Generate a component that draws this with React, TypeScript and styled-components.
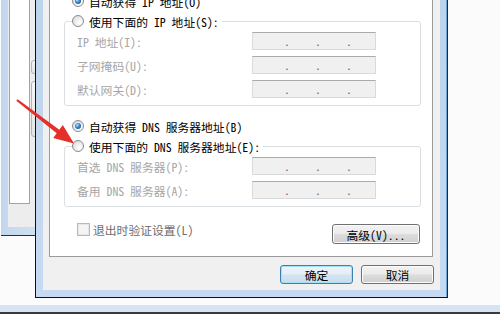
import styled, { createGlobalStyle, css } from 'styled-components';

const GlobalStyle = createGlobalStyle`
  html, body {
    margin: 0;
    padding: 0;
    background: #fbfbfb;
  }
`;

const Desktop = styled.div`
  position: relative;
  width: 500px;
  height: 314px;
  overflow: hidden;
  background: #fbfbfb;
  font-family: "Noto Sans CJK SC", "DejaVu Sans", sans-serif;
  font-size: 11.8px;
  font-feature-settings: "hwid" 1;
  color: #000;
`;

/* window peeking out behind the dialog */
const BackWindow = styled.div`
  position: absolute;
  left: 1px;
  top: -20px;
  width: 40px;
  height: 256px;
  box-sizing: border-box;
  padding: 0 0 8px 7px;
  background: linear-gradient(to right, #c2d7ee, #d2e1f2);
  border-bottom: 1px solid #2e2e2e;
  display: flex;
`;

const BackBody = styled.div`
  flex: 1;
  display: flex;
  gap: 1px;
  padding: 0 0 23px 1px;
  background: #ededed;
`;

const BackPanel = styled.div`
  width: 21px;
  box-sizing: border-box;
  background: #fff;
  border: 1px solid #a3a3a3;
  border-top: none;
`;

const BackSide = styled.div`
  display: flex;
  flex-direction: column;
  padding-top: 80px;
  gap: 7px;
`;

const BackKnob = styled.div<{ $h: number }>`
  width: 8px;
  height: ${p => p.$h}px;
  box-sizing: border-box;
  border: 1px solid #b4b4b4;
  border-radius: 3px;
  background: linear-gradient(#f6f6f6, #e4e4e4);
`;

const BottomWindow = styled.div`
  position: absolute;
  left: 0;
  top: 305px;
  width: 500px;
  height: 9px;
  box-sizing: border-box;
  background: #d5e3f2;
  border-bottom: 2px solid #3a3a3a;
`;

const Dialog = styled.div`
  position: absolute;
  left: 35px;
  top: -20px;
  width: 413px;
  box-sizing: border-box;
  border: 1px solid #111;
  border-right-color: #1c2a3a;
  padding: 7px;
  background: linear-gradient(to bottom, #bcd3ec, #c6dbf1);
  box-shadow: inset -1px 0 0 #6fa3d6;
`;

const Body = styled.div`
  background: #f0f0f0;
  padding: 4px 0 6px 6px;
`;

const TabPage = styled.div`
  width: 384px;
  box-sizing: border-box;
  background: #fff;
  border: 1px solid #9b9b9b;
  padding: 0 0 12px 0;
  display: flex;
  flex-direction: column;
`;

const OptionRow = styled.label<{ $h: number; $mt?: number }>`
  display: flex;
  align-items: center;
  gap: 5px;
  height: ${p => p.$h}px;
  margin-top: ${p => p.$mt ?? 0}px;
  padding-left: 22px;
  white-space: nowrap;
`;

const Radio = styled.span<{ $checked?: boolean }>`
  position: relative;
  flex: none;
  box-sizing: border-box;
  width: 12px;
  height: 12px;
  border-radius: 50%;
  border: 1px solid #8b8b8b;
  background: radial-gradient(circle at 65% 70%, #ffffff 0, #f2f2f2 35%, #d4d4d4 100%);
  ${p =>
    p.$checked &&
    css`
      &::after {
        content: '';
        position: absolute;
        left: 2px;
        top: 2px;
        width: 6px;
        height: 6px;
        border-radius: 50%;
        background: radial-gradient(circle at 38% 35%, #bfe3ff 0, #3b8ad6 40%, #0f3f78 100%);
      }
    `}
`;

const Group = styled.fieldset<{ $mt: number }>`
  margin: ${p => p.$mt}px 11px 0 14px;
  padding: 0;
  min-width: 0;
  border: 1px solid #dadfe3;
  border-radius: 3px;
`;

const GroupLegend = styled.legend`
  display: flex;
  align-items: center;
  gap: 5px;
  height: 20px;
  margin-left: 7px;
  padding: 0 3px 0 0;
  white-space: nowrap;
`;

const FieldGrid = styled.div`
  display: grid;
  grid-template-columns: 175px 124px;
  grid-auto-rows: 18px;
  row-gap: 6px;
  align-items: center;
  padding: 1px 0 7px 12px;
`;

const FieldLabel = styled.span`
  color: #a6a6a6;
  white-space: nowrap;
`;

const IpBox = styled.div`
  box-sizing: border-box;
  height: 18px;
  display: flex;
  gap: 25px;
  padding-left: 31px;
  background: #f0f0f0;
  border: 1px solid #dadada;
  border-top-color: #ababab;
  line-height: 15px;
  color: #6a6a6a;
`;

const IpDot = styled.span`
  width: 6px;
  text-align: center;
`;

const FooterRow = styled.div`
  display: flex;
  justify-content: space-between;
  align-items: flex-start;
  margin-top: 17px;
  padding: 0 12px 0 27px;
`;

const CheckLabel = styled.label`
  display: flex;
  align-items: center;
  gap: 3px;
  height: 13px;
  margin-top: -1px;
  color: #6d6d6d;
  white-space: nowrap;
`;

const CheckBox = styled.span`
  box-sizing: border-box;
  width: 13px;
  height: 13px;
  border: 1px solid #b9b9b9;
  background: #f4f4f4;
  box-shadow: inset 0 0 0 1px #e6e6e6;
`;

const Button = styled.button<{ $w: number; $h: number; $default?: boolean }>`
  box-sizing: border-box;
  width: ${p => p.$w}px;
  height: ${p => p.$h}px;
  padding: 0;
  font: inherit;
  color: #000;
  border-radius: 3px;
  border: 1px solid #707070;
  background: linear-gradient(#f2f2f2 0%, #ebebeb 48%, #dddddd 52%, #cfcfcf 100%);
  box-shadow: inset 0 0 0 1px #fcfcfc;
  ${p =>
    p.$default &&
    css`
      border-color: #3c7fb1;
      background: linear-gradient(#eef5fa 0%, #e4eef6 48%, #d4e4f1 52%, #c9dcec 100%);
      box-shadow: inset 0 0 0 1px #a6e0f8;
    `}
`;

const ButtonBar = styled.div`
  display: flex;
  justify-content: flex-end;
  gap: 8px;
  padding: 8px 6px 0 0;
`;

const ArrowLayer = styled.svg`
  position: absolute;
  left: 0;
  top: 0;
  pointer-events: none;
`;

const IpField = () => (
  <IpBox>
    <IpDot>.</IpDot>
    <IpDot>.</IpDot>
    <IpDot>.</IpDot>
  </IpBox>
);

export default function App() {
  return (
    <Desktop>
      <GlobalStyle />
      <BackWindow>
        <BackBody>
          <BackPanel />
          <BackSide>
            <BackKnob $h={14} />
            <BackKnob $h={56} />
          </BackSide>
        </BackBody>
      </BackWindow>
      <BottomWindow />

      <Dialog>
        <Body>
          <TabPage>
            <OptionRow $h={16}>
              <Radio $checked />
              自动获得 IP 地址(O)
            </OptionRow>
            <Group $mt={2}>
              <GroupLegend>
                <Radio />
                使用下面的 IP 地址(S):
              </GroupLegend>
              <FieldGrid>
                <FieldLabel>IP 地址(I):</FieldLabel>
                <IpField />
                <FieldLabel>子网掩码(U):</FieldLabel>
                <IpField />
                <FieldLabel>默认网关(D):</FieldLabel>
                <IpField />
              </FieldGrid>
            </Group>

            <OptionRow $h={20} $mt={10}>
              <Radio $checked />
              自动获得 DNS 服务器地址(B)
            </OptionRow>
            <Group $mt={0}>
              <GroupLegend>
                <Radio />
                使用下面的 DNS 服务器地址(E):
              </GroupLegend>
              <FieldGrid>
                <FieldLabel>首选 DNS 服务器(P):</FieldLabel>
                <IpField />
                <FieldLabel>备用 DNS 服务器(A):</FieldLabel>
                <IpField />
              </FieldGrid>
            </Group>

            <FooterRow>
              <CheckLabel>
                <CheckBox />
                退出时验证设置(L)
              </CheckLabel>
              <Button $w={88} $h={20}>高级(V)...</Button>
            </FooterRow>
          </TabPage>
          <ButtonBar>
            <Button $w={73} $h={19} $default>确定</Button>
            <Button $w={73} $h={19}>取消</Button>
          </ButtonBar>
        </Body>
      </Dialog>

      <ArrowLayer width="500" height="314" viewBox="0 0 500 314">
        <polygon
          points="16.3,100.8 56.7,133.3 53.2,137.9 74,143.5 62.8,125.1 59.3,129.7 17.7,99.2"
          fill="#e5302a"
        />
      </ArrowLayer>
    </Desktop>
  );
}
